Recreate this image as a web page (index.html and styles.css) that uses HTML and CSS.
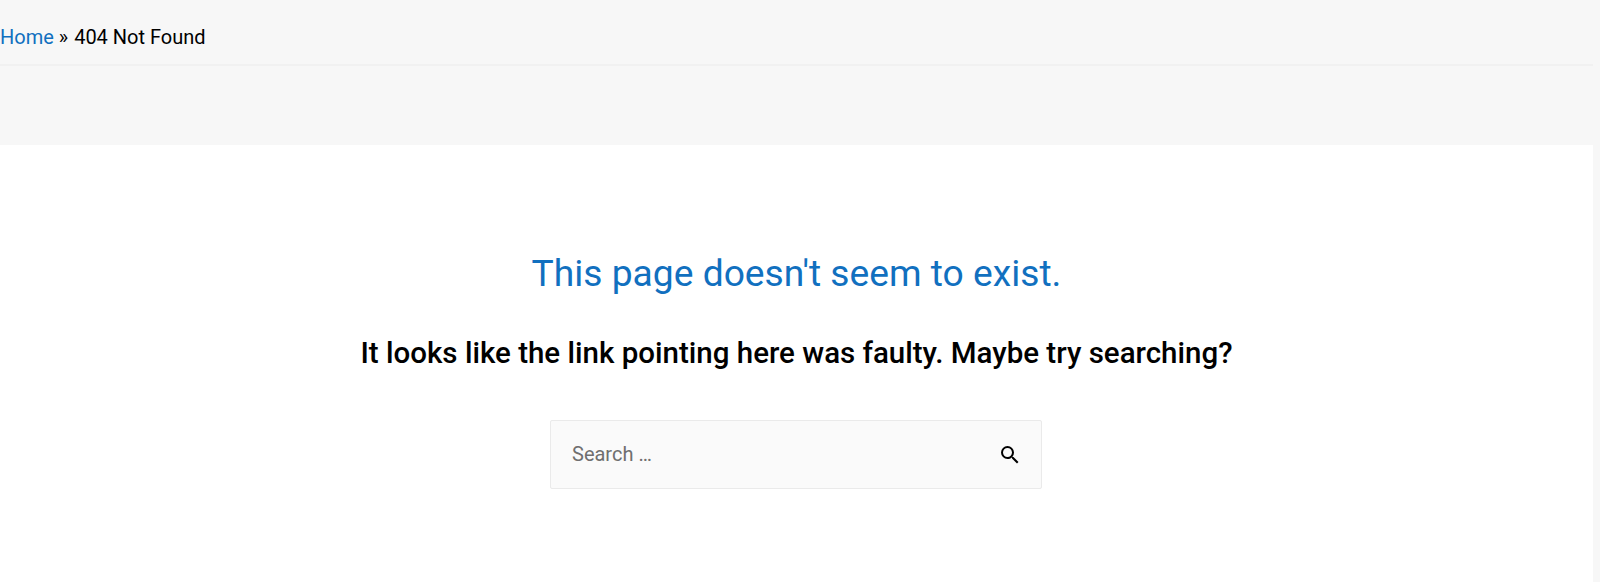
FILE: index.html
```html
<!DOCTYPE html>
<html lang="en">

<head>
  <meta charset="UTF-8" />
  <meta name="viewport" content="width=device-width, initial-scale=1.0" />
  <title>Page not found</title>
  <link rel="stylesheet" href="styles.css">
</head>

<body>
  <div class="page">
    <header class="page-top">
      <nav class="breadcrumbs">
        <a href="#">Home</a> <span class="sep">»</span> <span>404 Not Found</span>
      </nav>
    </header>
    <main class="not-found">
      <h1 class="not-found-title">This page doesn't seem to exist.</h1>
      <p class="not-found-text">It looks like the link pointing here was faulty. Maybe try searching?</p>
      <form class="search-form">
        <input class="search-field" type="search" placeholder="Search …" />
        <button class="search-submit" type="button" aria-label="Search">
          <svg viewBox="0 0 24 24" width="24" height="24">
            <path d="M15.5 14h-.79l-.28-.27A6.47 6.47 0 0 0 16 9.5 6.5 6.5 0 1 0 9.5 16c1.61 0 3.09-.59 4.23-1.57l.27.28v.79l5 4.99L20.49 19l-4.99-5zm-6 0C7.01 14 5 11.99 5 9.5S7.01 5 9.5 5 14 7.01 14 9.5 11.99 14 9.5 14z" />
          </svg>
        </button>
      </form>
    </main>
  </div>
</body>

</html>
```

FILE: styles.css
```css
* {
  box-sizing: border-box;
}

html,
body {
  margin: 0;
  height: 100%;
}

body {
  background-color: #f7f7f7;
  font-family: Roboto, "Liberation Sans", sans-serif;
  color: #000;
  overflow: hidden;
}

.page {
  width: 1593px;
}

.page-top {
  height: 145px;
}

.breadcrumbs {
  height: 66px;
  padding-top: 25px;
  font-size: 20px;
  line-height: 24px;
  border-bottom: 2px solid #f1f1f1;
}

.breadcrumbs a {
  color: #1170bf;
  text-decoration: none;
}

.sep {
  margin-right: 1px;
}

.not-found {
  background-color: #fff;
  height: 437px;
  padding-top: 103px;
  text-align: center;
}

.not-found-title {
  margin: 0;
  font-size: 37.2px;
  line-height: 50px;
  font-weight: 400;
  color: #1170bf;
}

.not-found-text {
  margin: 35px 0 0;
  font-size: 29.5px;
  line-height: 40px;
  font-weight: 500;
}

.search-form {
  display: flex;
  align-items: center;
  width: 492px;
  height: 69px;
  margin: 47px 0 0 550px;
  padding-right: 19px;
  background-color: #fafafa;
  border: 1px solid #eaeaea;
  border-radius: 2px;
}

.search-field {
  flex: 1;
  min-width: 0;
  height: 100%;
  padding: 0 21px 2px;
  border: none;
  outline: none;
  background: transparent;
  font-family: inherit;
  font-size: 20px;
  color: #000;
}

.search-field::placeholder {
  color: #6f6f6f;
  opacity: 1;
}

.search-submit {
  display: flex;
  width: 24px;
  height: 24px;
  padding: 0;
  border: none;
  background: none;
}
```
